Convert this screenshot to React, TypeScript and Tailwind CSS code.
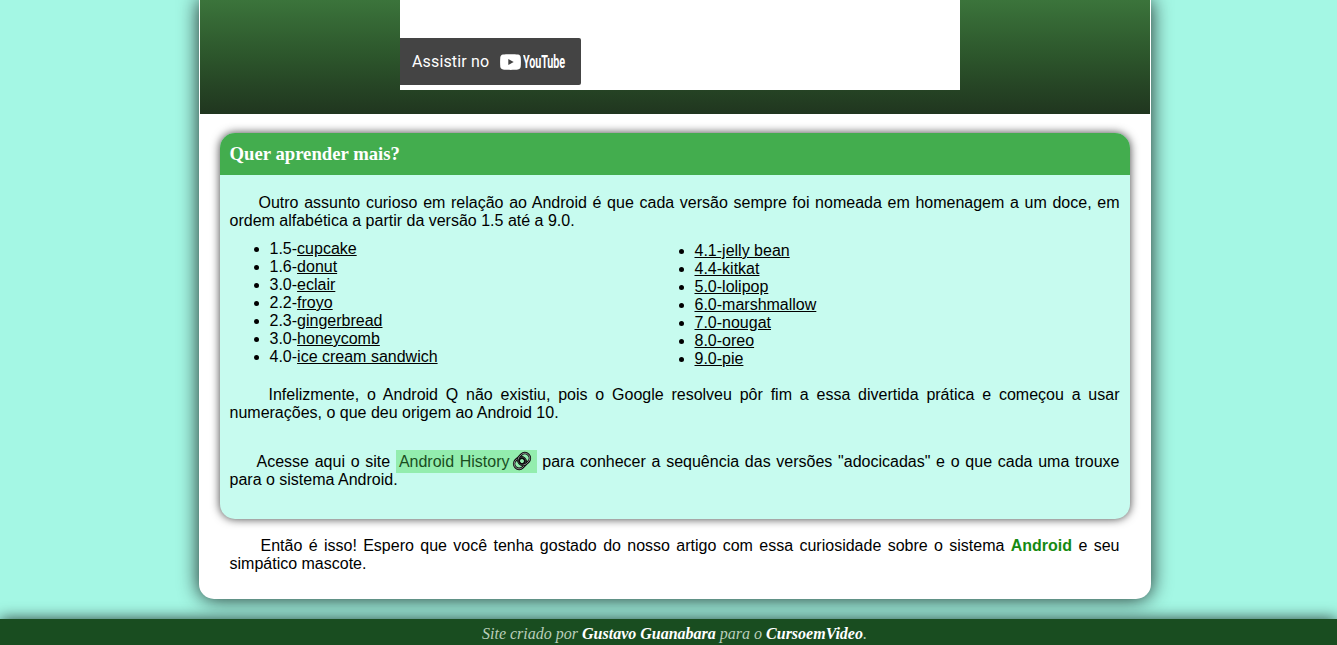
const leftVersions = [
  ['1.5-', 'cupcake'],
  ['1.6-', 'donut'],
  ['3.0-', 'eclair'],
  ['2.2-', 'froyo'],
  ['2.3-', 'gingerbread'],
  ['3.0-', 'honeycomb'],
  ['4.0-', 'ice cream sandwich'],
];

const rightVersions = [
  '4.1-jelly bean',
  '4.4-kitkat',
  '5.0-lolipop',
  '6.0-marshmallow',
  '7.0-nougat',
  '8.0-oreo',
  '9.0-pie',
];

function ChainIcon() {
  return (
    <svg className="ml-[2px] inline-block h-[20px] w-[20px] align-[-4px]" viewBox="0 0 20 20" fill="none">
      <g transform="rotate(-45 10 10)">
        <rect x="1" y="5" width="12.400" height="10" rx="5" stroke="#0c0c0c" strokeWidth="2.6" />
        <rect x="1" y="5" width="12.400" height="10" rx="5" stroke="#b5b5b5" strokeWidth="0.7" />
        <rect x="6.600" y="5" width="12.400" height="10" rx="5" stroke="#0c0c0c" strokeWidth="2.6" />
        <rect x="6.600" y="5" width="12.400" height="10" rx="5" stroke="#b5b5b5" strokeWidth="0.7" />
        <circle cx="10" cy="10" r="2.800" stroke="#0c0c0c" strokeWidth="1.6" />
      </g>
    </svg>
  );
}

function Video() {
  return (
    <div className="mx-px h-[114px] bg-linear-to-b from-[#3b743b] via-[#2c552b] via-50% to-[#20361f] pl-[200px]">
      <div className="h-[90px] w-[560px] bg-white pt-[38px]">
        <a className="flex h-[47px] w-[181px] items-center rounded-r-[2px] bg-[#444] pl-[12px] text-white">
          <span className="w-[88px] font-['Roboto',sans-serif] text-[16px] leading-[18px] font-normal tracking-[0.15px] whitespace-nowrap">
            Assistir no
          </span>
          <svg className="h-[16px] w-[21px] shrink-0" viewBox="0 0 21 16">
            <path
              fill="#fff"
              d="M3 .5C6 0 15 0 18 .5c1.700.3 2.500 1.200 2.700 2.900.3 2.900.3 6.300 0 9.200-.2 1.700-1 2.600-2.700 2.900-3 .5-12 .5-15 0C1.300 15.200.5 14.300.3 12.600c-.3-2.900-.3-6.300 0-9.200C.5 1.700 1.300.8 3 .5Z"
            />
            <path fill="#444" d="m8.300 4.900 5.400 3.100-5.400 3.100Z" />
          </svg>
          <span className="ml-[2px] w-[44px] origin-left scale-x-[0.6] font-['Roboto',sans-serif] text-[18px] leading-[18px] font-bold tracking-[-0.2px]">
            YouTube
          </span>
        </a>
      </div>
    </div>
  );
}

export default function App() {
  return (
    <div className="h-[645px] overflow-hidden bg-[#a4f7e4] font-['Liberation_Sans',Arial,sans-serif] text-[16px] leading-[18px] text-black">
      <main className="ml-[199px] h-[599px] w-[952px] rounded-b-[15px] bg-white shadow-[0_0_20px_rgba(0,0,0,0.85)]">
        <Video />
        <aside className="mx-[21px] mt-[19px] h-[386px] rounded-[15px] bg-[#c7fbef] shadow-[0_0_10px_rgba(0,0,0,0.75)]">
          <h2 className="h-[42px] rounded-t-[15px] bg-[#43ad4e] pt-[10px] pl-[9.5px] font-['Liberation_Serif','Times_New_Roman',serif] text-[18.72px] leading-[21px] font-bold text-white">
            Quer aprender mais?
          </h2>
          <div className="pt-[19px] pr-[10.5px] pl-[9.5px]">
            <p className="text-justify indent-[29px]">
              Outro assunto curioso em relação ao Android é que cada versão sempre foi nomeada em homenagem a um doce, em
              ordem alfabética a partir da versão 1.5 até a 9.0.
            </p>
            <div className="mt-[10px] grid grid-cols-[425px_1fr]">
              <ul className="list-disc pl-[40px]">
                {leftVersions.map(([number, name]) => (
                  <li key={name}>
                    {number}
                    <u>{name}</u>
                  </li>
                ))}
              </ul>
              <ul className="mt-[2px] list-disc pl-[40px]">
                {rightVersions.map((version) => (
                  <li key={version}>
                    <u>{version}</u>
                  </li>
                ))}
              </ul>
            </div>
            <p className="mt-[18px] text-justify indent-[39px]">
              Infelizmente, o Android Q não existiu, pois o Google resolveu pôr fim a essa divertida prática e começou a
              usar numerações, o que deu origem ao Android 10.
            </p>
            <p className="mt-[29px] text-justify indent-[27px]">
              Acesse aqui o site{' '}
              <a className="bg-[#93edae] px-[3px] pt-[3px] pb-[3px] text-[#1a4d1f]">
                Android History
                <ChainIcon />
                <span className="inline-block w-[2px]" />
              </a>{' '}
              para conhecer a sequência das versões "adocicadas" e o que cada uma trouxe para o sistema Android.
            </p>
          </div>
        </aside>
        <p className="mt-[18px] mr-[31.5px] ml-[30.5px] text-justify indent-[31px]">
          Então é isso! Espero que você tenha gostado do nosso artigo com essa curiosidade sobre o sistema{' '}
          <strong className="text-[#168a12]">Android</strong> e seu simpático mascote.
        </p>
      </main>
      <footer className="relative mt-[20px] h-[26px] bg-[#194d20] pt-[5px] pl-[12px] text-center font-['Liberation_Serif','Times_New_Roman',serif] text-[16px] leading-[20px] text-[#b9cfbb] italic shadow-[0_0_15px_rgba(0,0,0,0.75)]">
        Site criado por <b className="text-white">Gustavo Guanabara</b> para o <b className="text-white">CursoemVideo</b>.
      </footer>
    </div>
  );
}
